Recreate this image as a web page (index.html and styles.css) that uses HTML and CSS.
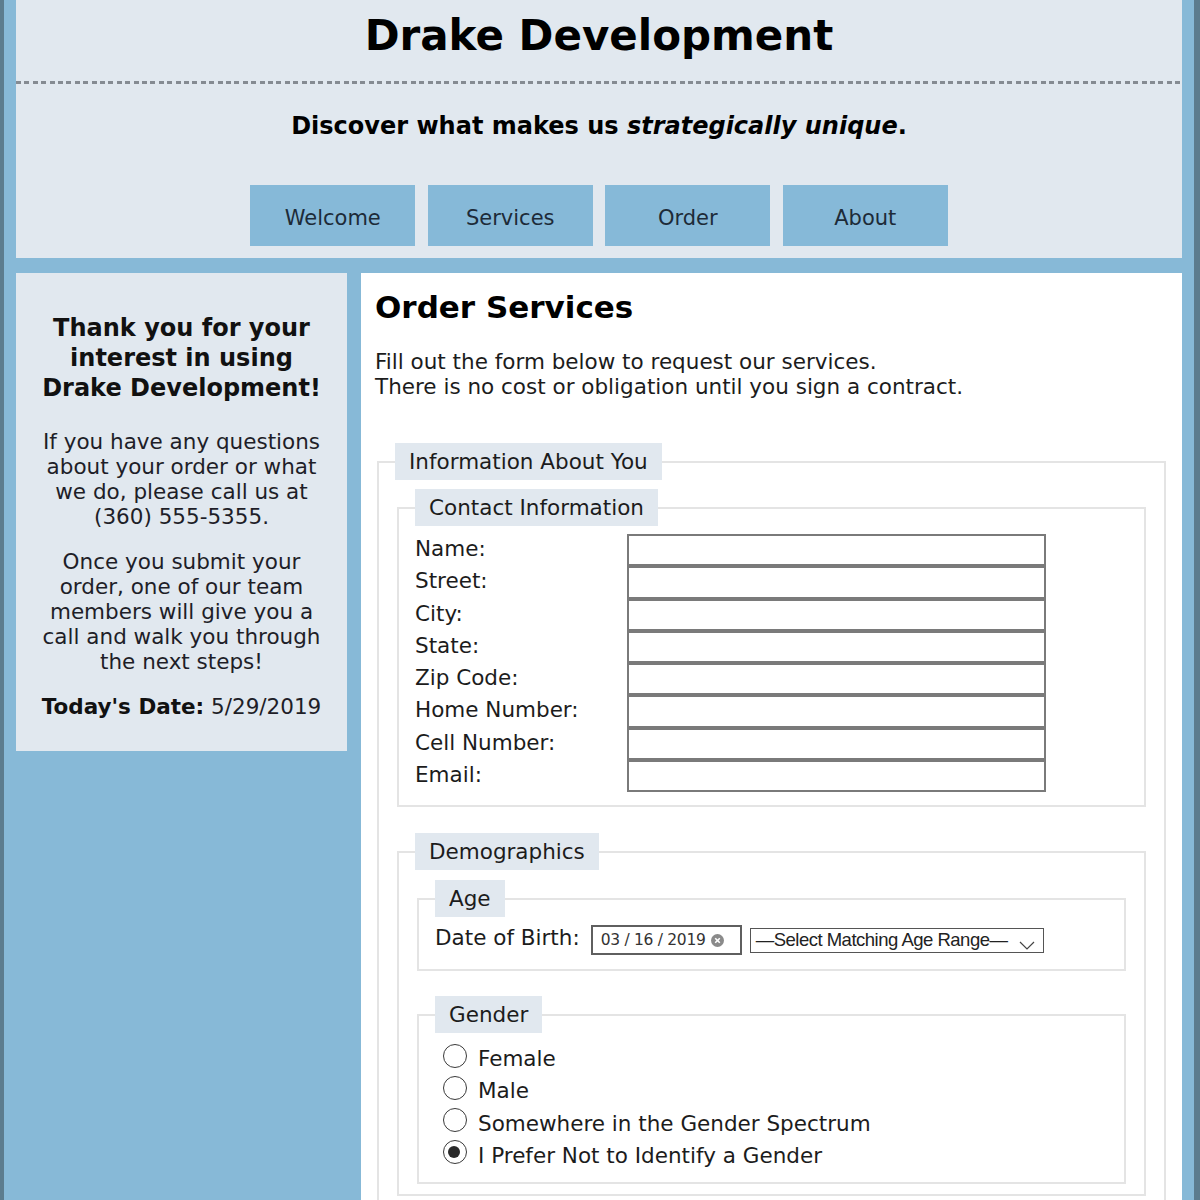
FILE: index.html
```html
<!DOCTYPE html>
<html lang="en">
<head>
<meta charset="utf-8">
<title>Drake Development - Order Services</title>
<link rel="stylesheet" href="styles.css">
</head>
<body>
<div class="page">
  <header class="site-header">
    <h1 class="site-title">Drake Development</h1>
    <div class="divider"></div>
    <p class="tagline">Discover what makes us <em>strategically unique</em>.</p>
    <nav class="nav">
      <a class="nav-item" href="#">Welcome</a>
      <a class="nav-item" href="#">Services</a>
      <a class="nav-item" href="#">Order</a>
      <a class="nav-item" href="#">About</a>
    </nav>
  </header>
  <div class="columns">
    <aside class="sidebar">
      <h3 class="side-title">Thank you for your interest in using Drake Development!</h3>
      <p class="side-text">If you have any questions about your order or what we do, please call us at (360)&nbsp;555-5355.</p>
      <p class="side-text">Once you submit your order, one of our team members will give you a call and walk you through the next steps!</p>
      <p class="side-date"><strong>Today's Date:</strong> 5/29/2019</p>
    </aside>
    <main class="content">
      <h2 class="page-title">Order Services</h2>
      <p class="intro">Fill out the form below to request our services.<br>There is no cost or obligation until you sign a contract.</p>
      <form class="order-form">
        <fieldset class="fs">
          <legend class="lg">Information About You</legend>
          <fieldset class="fs fs-contact">
            <legend class="lg">Contact Information</legend>
            <div class="contact-grid">
              <label class="field-label">Name:</label><input class="text-input" type="text">
              <label class="field-label">Street:</label><input class="text-input" type="text">
              <label class="field-label">City:</label><input class="text-input" type="text">
              <label class="field-label">State:</label><input class="text-input" type="text">
              <label class="field-label">Zip Code:</label><input class="text-input" type="text">
              <label class="field-label">Home Number:</label><input class="text-input" type="text">
              <label class="field-label">Cell Number:</label><input class="text-input" type="text">
              <label class="field-label">Email:</label><input class="text-input" type="text">
            </div>
          </fieldset>
          <fieldset class="fs fs-gap">
            <legend class="lg">Demographics</legend>
            <fieldset class="fs fs-age">
              <legend class="lg">Age</legend>
              <div class="dob-row">
                <span class="dob-label">Date of Birth:</span>
                <span class="date-box"><span class="date-text">03 / 16 / 2019</span><svg class="clear-icon" width="13" height="13" viewBox="0 0 13 13"><circle cx="6.5" cy="6.5" r="6.5" fill="#8a8a8a"/><path d="M4.2 4.2 L8.8 8.8 M8.8 4.2 L4.2 8.8" stroke="#fff" stroke-width="1.6"/></svg></span>
                <span class="select-box"><span class="select-text">—Select Matching Age Range—</span><svg class="chev" width="16" height="10" viewBox="0 0 16 10"><path d="M1 2 L8 9 L15 2" fill="none" stroke="#444" stroke-width="1.2"/></svg></span>
              </div>
            </fieldset>
            <fieldset class="fs fs-gender">
              <legend class="lg">Gender</legend>
              <div class="radio-list">
                <label class="radio-row"><input class="radio" type="radio" name="g"> Female</label>
                <label class="radio-row"><input class="radio" type="radio" name="g"> Male</label>
                <label class="radio-row"><input class="radio" type="radio" name="g"> Somewhere in the Gender Spectrum</label>
                <label class="radio-row"><input class="radio" type="radio" name="g" checked> I Prefer Not to Identify a Gender</label>
              </div>
            </fieldset>
          </fieldset>
        </fieldset>
      </form>
    </main>
  </div>
</div>
</body>
</html>
```
FILE: styles.css
```css
* { box-sizing: border-box; }
html, body { margin: 0; padding: 0; }
body {
  background: #5c7c8e;
  font-family: "DejaVu Sans", Verdana, sans-serif;
  color: #1c1c1c;
}
.page {
  width: 1190px;
  margin: 0 0 0 4px;
  background: #87b9d7;
  padding: 0 12px;
  height: 1200px;
  overflow: hidden;
}
.site-header {
  background: #e1e8ef;
  padding: 13px 0 12px;
  text-align: center;
}
.site-title {
  margin: 0;
  font-size: 42px;
  line-height: 46px;
  font-weight: bold;
  color: #000;
}
.divider {
  margin-top: 22px;
  height: 3px;
  background-image: repeating-linear-gradient(90deg, #858b92 0 5px, transparent 5px 8.4px);
}
.tagline {
  margin: 27px 0 0;
  font-size: 24px;
  line-height: 30px;
  font-weight: bold;
  color: #000;
}
.tagline em { font-style: italic; }
.nav {
  margin-top: 44px;
  display: flex;
  justify-content: center;
  gap: 12.5px;
}
.nav-item {
  display: block;
  width: 165px;
  height: 61px;
  line-height: 61px;
  padding-top: 3px;
  background: #86b9d8;
  color: #1d2b38;
  text-decoration: none;
  font-size: 21px;
}
.columns {
  margin-top: 15px;
  display: flex;
  align-items: flex-start;
  gap: 14px;
}
.sidebar {
  width: 331px;
  flex: none;
  background: #e1e8ef;
  padding: 40px 14px 32px;
  text-align: center;
  color: #1e1e28;
}
.side-title {
  margin: 0;
  font-size: 24px;
  line-height: 30px;
  font-weight: bold;
  color: #111;
}
.side-text {
  margin: 26px 0 0;
  font-size: 21.5px;
  line-height: 25px;
}
.side-text + .side-text { margin-top: 20px; }
.side-date {
  margin: 20px 0 0;
  font-size: 21.5px;
  line-height: 25px;
}
.side-date strong { color: #111; }
.content {
  flex: 1;
  background: #fff;
  padding: 16px 14px 0;
  min-height: 940px;
}
.page-title {
  margin: 0;
  font-size: 31px;
  line-height: 36px;
  font-weight: bold;
  color: #000;
}
.intro {
  margin: 24px 0 0;
  font-size: 21.5px;
  line-height: 25px;
}
.order-form { margin-top: 44px; }
.fs {
  margin: 0 2px;
  padding: 9px 16px 12px;
  border: 2px solid #e4e4e4;
  min-width: 0;
}
.lg {
  padding: 6px 14px;
  font-size: 21.5px;
  line-height: 25px;
  background: #e1e8ef;
  color: #1c1c1c;
}
.fs .fs { padding-top: 8px; padding-bottom: 10px; }
.fs .fs-contact { padding-bottom: 13px; }
.fs-gap { margin-top: 26px; }
.contact-grid {
  display: grid;
  grid-template-columns: 212px 419px;
}
.field-label {
  font-size: 21.5px;
  line-height: 29px;
  height: 32.3px;
}
.text-input {
  display: block;
  width: 419px;
  height: 32.3px;
  margin: 0;
  border: 2px solid #7a7a7a;
  background: #fff;
}
.fs .fs-age { padding-bottom: 14px; margin-top: 2px; }
.dob-row {
  display: flex;
  align-items: center;
  height: 30px;
  font-size: 21.5px;
}
.dob-label { margin-right: 11px; margin-bottom: 6px; }
.date-box {
  display: inline-flex;
  align-items: center;
  width: 151px;
  height: 30px;
  border: 2px solid #5f5f5f;
  padding-left: 8px;
  gap: 3px;
}
.date-text {
  font-size: 15.5px;
  color: #333;
  letter-spacing: -0.3px;
}
.clear-icon { margin-left: 2px; }
.select-box {
  position: relative;
  display: inline-flex;
  align-items: center;
  margin-left: 8px;
  width: 294px;
  height: 25px;
  border: 1.5px solid #555;
  padding-left: 5px;
}
.select-text {
  font-family: "Liberation Sans Narrow", "Liberation Sans", sans-serif;
  font-size: 18.5px;
  letter-spacing: -0.5px;
  color: #222;
}
.chev { position: absolute; right: 8px; top: 11px; }
.fs .fs-gender { margin-top: 25px; padding-top: 9px; padding-bottom: 10px; }
.radio-list { display: flex; flex-direction: column; }
.radio-row {
  display: flex;
  align-items: center;
  height: 32.3px;
  font-size: 21.5px;
}
.radio {
  appearance: none;
  -webkit-appearance: none;
  width: 24px;
  height: 24px;
  margin: -6px 11px 0 8px;
  border: 1.6px solid #3a3a3a;
  border-radius: 50%;
  background: #fff;
  position: relative;
}
.radio:checked::after {
  content: "";
  position: absolute;
  left: 4.4px;
  top: 4.4px;
  width: 12px;
  height: 12px;
  border-radius: 50%;
  background: #2a2a2a;
}
```
